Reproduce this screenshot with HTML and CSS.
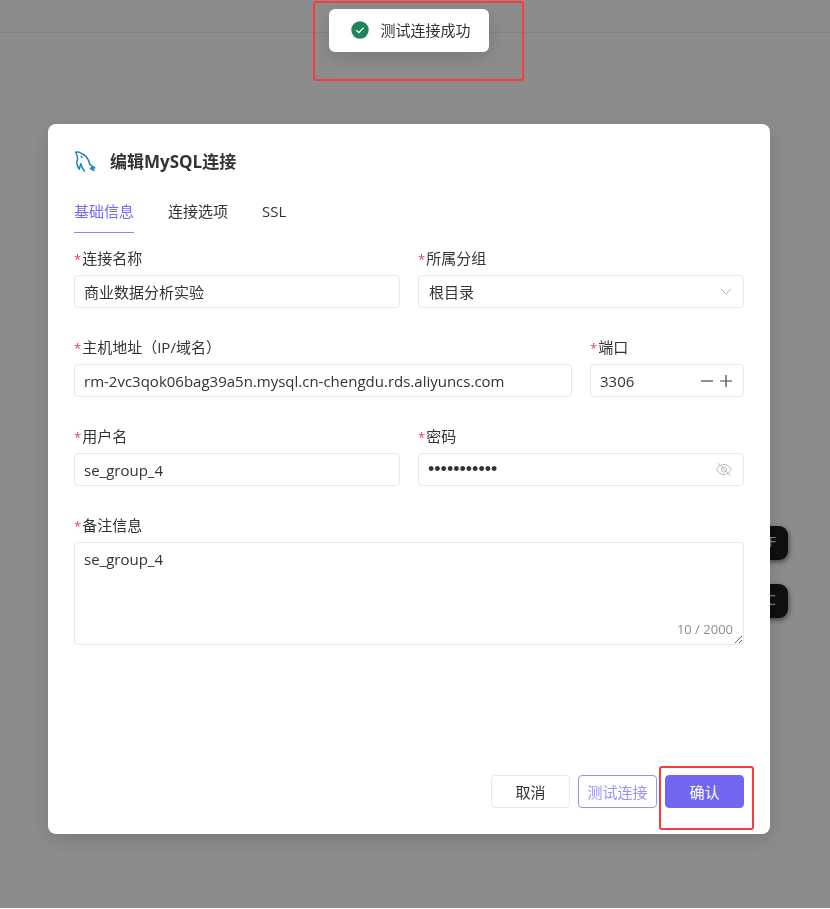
FILE: index.html
```
<!DOCTYPE html>
<html lang="zh-CN">
<head>
  <meta charset="UTF-8">
  <title>编辑MySQL连接</title>
  <link rel="stylesheet" href="styles.css">
</head>
<body>
  <header class="topbar"></header>
  <main class="side-actions">
    <button class="side-button" type="button">F</button>
    <button class="side-button" type="button">C</button>
  </main>

  <div class="mask">
    <div class="toast-layer">
      <div class="toast" role="status">
        <svg class="toast-icon" viewBox="0 0 18 18">
          <circle cx="9" cy="9" r="8.7" fill="#20835c"/>
          <path d="M5.3 9.2l2.6 2.5 4.7-5" fill="none" stroke="#fff" stroke-width="1.2"/>
        </svg>
        <span>测试连接成功</span>
      </div>
    </div>

    <div class="dialog" role="dialog" aria-labelledby="dialog-title">
      <div class="dialog-header">
        <svg class="logo" viewBox="0 0 22 22" fill="none" stroke="#1b87b8" stroke-width="1.5" stroke-linecap="round" stroke-linejoin="round">
          <path d="M2 1.2C4 .6 5.9 1.2 7.5 2.5c4.500 1.700 7 5.700 8.200 10.500 1 1.500 3.300 2 5 4l-3.600-.2 2.800 2.800-3.300-2"/>
          <path d="M2 1.2C2.100 3.500 4 5.500 3.600 8c-1.500 3-.4 7.200 1.700 10.200.7-1.600.5-3.600 1.600-5.500.8 3 1.700 5.600 3.600 7.200"/>
          <path d="M7.200 5.300l.8 1.200"/>
        </svg>
        <h1 id="dialog-title">编辑MySQL连接</h1>
      </div>

      <nav class="tabs">
        <a class="tab active" href="#base">基础信息</a>
        <a class="tab" href="#options">连接选项</a>
        <a class="tab" href="#ssl">SSL</a>
      </nav>

      <form class="form" id="base">
        <div class="row">
          <div class="field">
            <label class="label" for="name">连接名称</label>
            <input class="control" id="name" type="text" value="商业数据分析实验">
          </div>
          <div class="field">
            <label class="label" for="group">所属分组</label>
            <div class="control-wrap">
              <select class="control" id="group">
                <option>根目录</option>
              </select>
              <svg class="suffix arrow" viewBox="0 0 12 12" fill="none" stroke="#b4b4b8">
                <path d="M1 3.5l5 5 5-5"/>
              </svg>
            </div>
          </div>
        </div>

        <div class="row row-host">
          <div class="field">
            <label class="label" for="host">主机地址（IP/域名）</label>
            <input class="control" id="host" type="text" value="rm-2vc3qok06bag39a5n.mysql.cn-chengdu.rds.aliyuncs.com">
          </div>
          <div class="field">
            <label class="label" for="port">端口</label>
            <div class="control-wrap">
              <input class="control" id="port" type="text" inputmode="numeric" value="3306">
              <div class="suffix stepper">
                <button type="button" aria-label="减">
                  <svg viewBox="0 0 12 12" stroke="#444" stroke-width="1.2"><path d="M0 6h12"/></svg>
                </button>
                <button type="button" aria-label="加">
                  <svg viewBox="0 0 12 12" stroke="#444" stroke-width="1.2"><path d="M0 6h12M6 0v12"/></svg>
                </button>
              </div>
            </div>
          </div>
        </div>

        <div class="row">
          <div class="field">
            <label class="label" for="user">用户名</label>
            <input class="control" id="user" type="text" value="se_group_4">
          </div>
          <div class="field">
            <label class="label" for="password">密码</label>
            <div class="control-wrap">
              <input class="control" id="password" type="password" value="password123">
              <svg class="suffix eye" viewBox="0 0 16 14" fill="none" stroke="#b8b8bc">
                <path d="M.6 7C2.3 3.7 4.9 2 8 2s5.7 1.7 7.4 5c-1.7 3.3-4.3 5-7.4 5S2.3 10.3.6 7z"/>
                <circle cx="8" cy="7" r="2.6"/>
                <path d="M2 .8l12.5 12.4"/>
              </svg>
            </div>
          </div>
        </div>

        <div class="field">
          <label class="label" for="remark">备注信息</label>
          <div class="control-wrap">
            <textarea class="control" id="remark" maxlength="2000">se_group_4</textarea>
            <span class="count">10 / 2000</span>
          </div>
        </div>
      </form>

      <div class="dialog-footer">
        <button class="btn" type="button">取消</button>
        <button class="btn btn-outline" type="button">测试连接</button>
        <div class="confirm">
          <button class="btn btn-primary" type="submit" form="base">确认</button>
        </div>
      </div>
    </div>
  </div>
</body>
</html>
```
FILE: styles.css
```
* {
  box-sizing: border-box;
}

body {
  margin: 0;
  background: #fff;
  color: #333;
  font-family: "Open Sans", "Noto Sans CJK SC", sans-serif;
  font-size: 15px;
  line-height: 22px;
}

button,
input,
select,
textarea {
  margin: 0;
  color: inherit;
  font: inherit;
}

/* page behind the mask */
.topbar {
  height: 33px;
  border-bottom: 1px solid #eee;
}

.side-actions {
  display: flex;
  flex-direction: column;
  align-items: flex-end;
  gap: 24px;
  padding: 493px 42px 20px 0;
}

.side-button {
  width: 80px;
  height: 34px;
  padding: 0 12px 4px 0;
  border: none;
  border-radius: 9px;
  background: #1c1c1c;
  box-shadow: 1px 2px 5px rgba(0, 0, 0, 0.5);
  color: #eee;
  text-align: right;
}

.mask {
  position: fixed;
  inset: 0 0 1px;
  overflow: auto;
  padding: 124px 60px 40px 48px;
  background: rgba(0, 0, 0, 0.45);
}

/* message */
.toast-layer {
  position: absolute;
  top: 9px;
  left: 0;
  right: 12px;
  display: flex;
  justify-content: center;
}

.toast {
  position: relative;
  display: flex;
  align-items: center;
  gap: 11px;
  padding: 10px 18px 11px 22px;
  border-radius: 6px;
  background: #fff;
  box-shadow: 0 6px 20px rgba(0, 0, 0, 0.15);
}

.toast-icon {
  width: 18px;
  height: 18px;
}

.toast::after,
.confirm::after {
  content: "";
  position: absolute;
  border: 2px solid #fb3b3b;
  border-radius: 3px;
  pointer-events: none;
}

.toast::after {
  inset: -8px -35px -29px -16px;
}

/* dialog */
.dialog {
  padding: 26px;
  border-radius: 8px;
  background: #fff;
  box-shadow: 0 6px 20px rgba(0, 0, 0, 0.15);
}

.dialog-header {
  display: flex;
  align-items: center;
  gap: 14px;
}

.logo {
  width: 22px;
  height: 22px;
}

h1 {
  margin: 0;
  font-size: 17px;
  line-height: 24px;
}

.tabs {
  display: flex;
  gap: 34px;
  margin-top: 26px;
}

.tab {
  padding-bottom: 10px;
  border-bottom: 1px solid transparent;
  color: inherit;
  text-decoration: none;
}

.tab.active {
  border-color: #8f85f5;
  color: #7468f2;
}

.form {
  display: flex;
  flex-direction: column;
  gap: 28px;
  min-height: 542px;
  padding-top: 14px;
}

.row {
  display: grid;
  grid-template-columns: 1fr 1fr;
  gap: 18px;
}

.row-host {
  grid-template-columns: 1fr 154px;
}

.label {
  display: block;
  height: 22px;
  margin-bottom: 6px;
}

.label::before {
  content: "*";
  margin-right: 1px;
  color: #dc4459;
  font-size: 13px;
  line-height: 1;
}

.control-wrap {
  position: relative;
}

.control {
  display: block;
  width: 100%;
  height: 33px;
  padding: 0 9px;
  border: 1px solid #e8e8ea;
  border-radius: 4px;
  outline: none;
  background: #fff;
}

select.control {
  padding: 0 10px;
  appearance: none;
}

input[type="password"] {
  font-family: "Liberation Sans", sans-serif;
  font-size: 18px;
}

textarea.control {
  height: 103px;
  padding: 5px 9px;
  resize: vertical;
}

.suffix {
  position: absolute;
  top: 0;
  right: 12px;
  height: 33px;
}

.arrow {
  width: 12px;
}

.eye {
  width: 16px;
}

.stepper {
  display: flex;
  align-items: center;
  gap: 7px;
}

.stepper button {
  display: flex;
  padding: 0;
  border: none;
  background: none;
}

.stepper svg {
  width: 12px;
  height: 12px;
}

.count {
  position: absolute;
  right: 11px;
  bottom: 5px;
  color: #8c8c94;
  font-size: 13px;
}

.dialog-footer {
  display: flex;
  justify-content: flex-end;
  gap: 8px;
}

.btn {
  width: 79px;
  height: 33px;
  padding: 0;
  border: 1px solid #e8e8ea;
  border-radius: 4px;
  background: #fff;
  cursor: pointer;
}

.btn-outline {
  border-color: #9a91f7;
  color: #9a91f7;
}

.btn-primary {
  border-color: #7266f0;
  background: #7266f0;
  color: #fff;
}

.confirm {
  position: relative;
}

.confirm::after {
  inset: -9px -10px -22px -6px;
}
```
